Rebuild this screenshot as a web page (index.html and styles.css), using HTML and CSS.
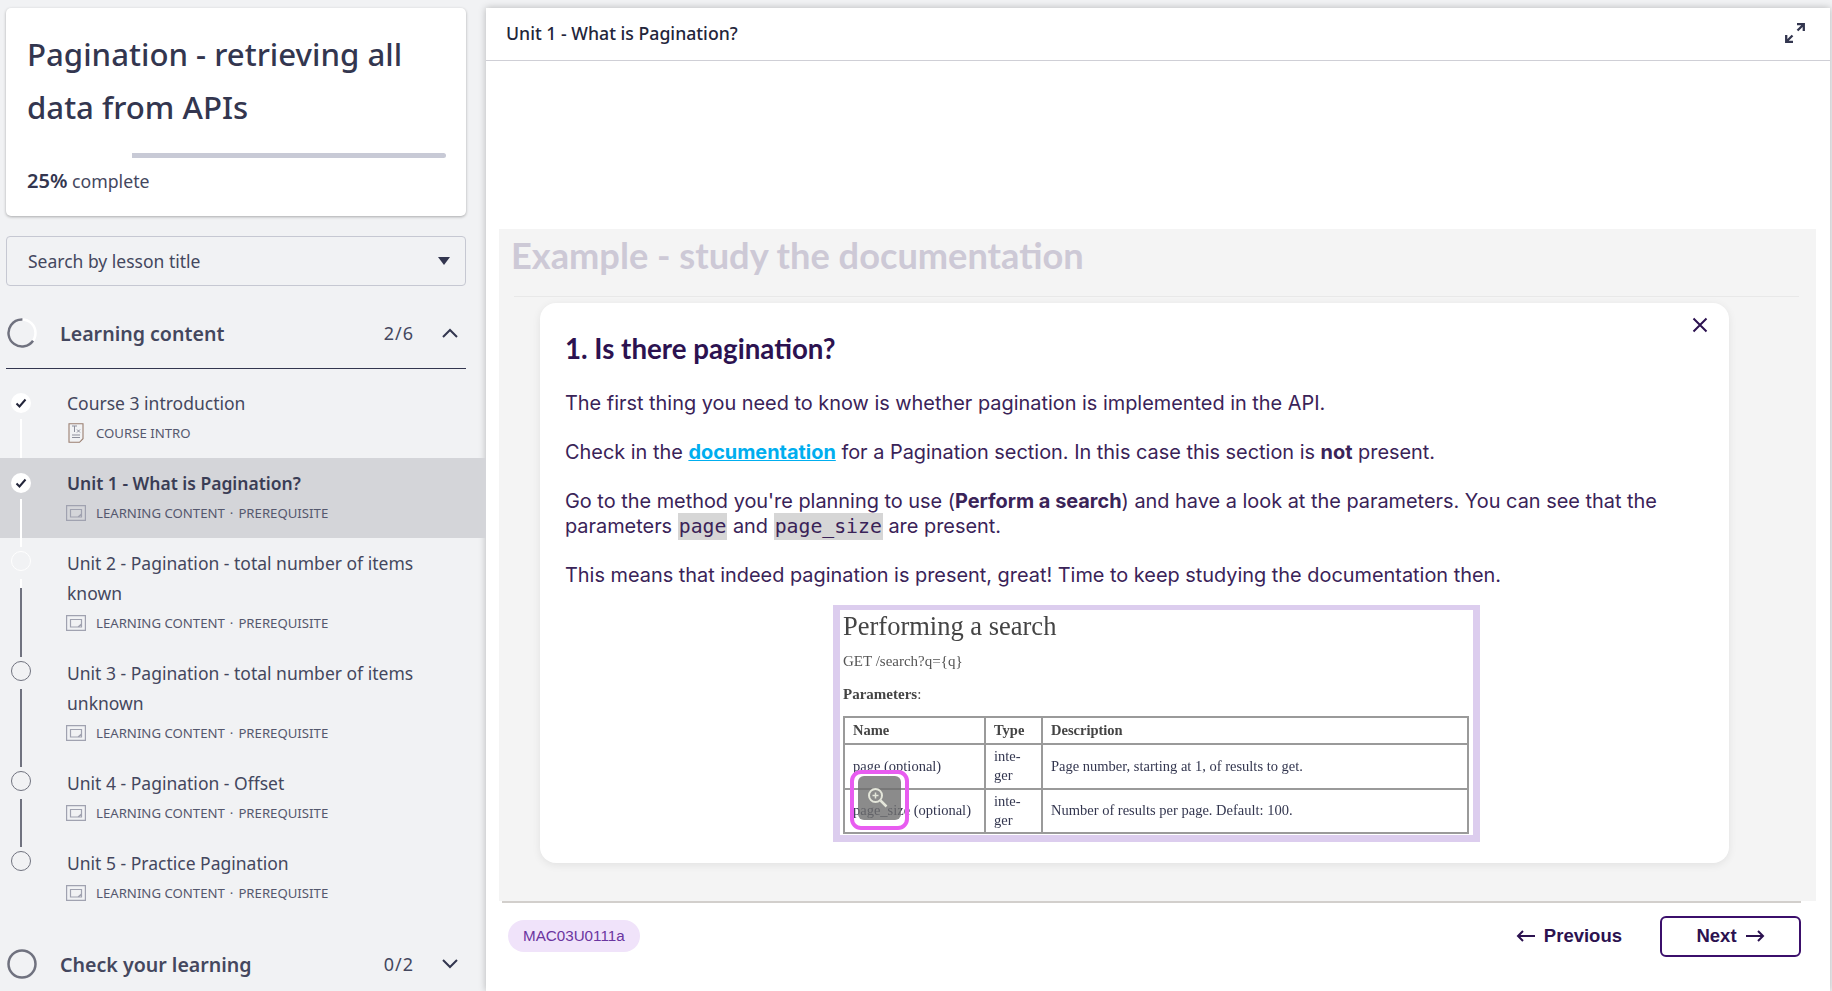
FILE: index.html
```html
<html>
  <head>
  <title>Pagination - retrieving all data from APIs</title>
  <link rel="stylesheet" href="styles.css">
  </head>
  <body>
    <aside class="sidebar">
      <div class="course-card">
        <h1>Pagination - retrieving all data from APIs</h1>
        <div class="progress">
          <div class="progress-done"></div>
          <div class="progress-left"></div>
        </div>
        <p class="progress-text"><b>25%</b> complete</p>
      </div>

      <div class="search">
        <span>Search by lesson title</span>
        <span class="caret"></span>
      </div>

      <div class="section-head section-open">
        <svg class="ring" viewBox="0 0 30 30" width="30" height="30">
          <circle cx="15" cy="15" r="13.5" fill="none" stroke="#fff" stroke-width="2.5"/>
          <circle cx="15" cy="15" r="13.5" fill="none" stroke="#70727f" stroke-width="2.5" stroke-dasharray="55.4 30" transform="rotate(35 15 15)"/>
        </svg>
        <span class="section-name">Learning content</span>
        <span class="section-count">2/6</span>
        <svg class="chevron" viewBox="0 0 16 10" width="16" height="10"><path d="M1 9l7-7 7 7" fill="none" stroke="#33364f" stroke-width="2"/></svg>
      </div>

      <ul class="lessons">
        <li class="lesson lesson-done">
          <span class="dot"><svg viewBox="0 0 20 20" width="20" height="20"><path d="M5.5 10.5l3 3 6-7" fill="none" stroke="#23253a" stroke-width="2"/></svg></span>
          <div>
            <div class="lesson-title">Course 3 introduction</div>
            <div class="lesson-meta">
              <svg class="meta-icon" viewBox="0 0 20 20" width="20" height="20">
                <path d="M3 .7h14v15l-3.500 3.600H3z" fill="none" stroke="#9a7f70" stroke-width="1.100"/>
                <path d="M6 3h5M8.500 3v6M11 6.500l3 3M14 6.500l-3 3M6 12h8M6 14.500h8" fill="none" stroke="#8d8f9c" stroke-width="1"/>
              </svg>
              <span>COURSE INTRO</span>
            </div>
          </div>
        </li>
        <li class="lesson lesson-done lesson-active">
          <span class="dot"><svg viewBox="0 0 20 20" width="20" height="20"><path d="M5.5 10.5l3 3 6-7" fill="none" stroke="#23253a" stroke-width="2"/></svg></span>
          <div>
            <div class="lesson-title">Unit 1 - What is Pagination?</div>
            <div class="lesson-meta">
              <svg class="meta-icon" viewBox="0 0 20 16" width="20" height="16"><path d="M.6.600h18.800v14.800H.6zM4.500 4.500h11v7.500H4.500zM12 12l3.500-3" fill="none" stroke="#a0a2b0" stroke-width="1.200"/></svg>
              <span>LEARNING CONTENT</span><span class="sep">·</span><span>PREREQUISITE</span>
            </div>
          </div>
        </li>
        <li class="lesson lesson-next">
          <span class="dot"></span>
          <div>
            <div class="lesson-title">Unit 2 - Pagination - total number of items known</div>
            <div class="lesson-meta">
              <svg class="meta-icon" viewBox="0 0 20 16" width="20" height="16"><path d="M.6.600h18.800v14.800H.6zM4.500 4.500h11v7.500H4.500zM12 12l3.500-3" fill="none" stroke="#a0a2b0" stroke-width="1.200"/></svg>
              <span>LEARNING CONTENT</span><span class="sep">·</span><span>PREREQUISITE</span>
            </div>
          </div>
        </li>
        <li class="lesson">
          <span class="dot"></span>
          <div>
            <div class="lesson-title">Unit 3 - Pagination - total number of items unknown</div>
            <div class="lesson-meta">
              <svg class="meta-icon" viewBox="0 0 20 16" width="20" height="16"><path d="M.6.600h18.800v14.800H.6zM4.500 4.500h11v7.500H4.500zM12 12l3.500-3" fill="none" stroke="#a0a2b0" stroke-width="1.200"/></svg>
              <span>LEARNING CONTENT</span><span class="sep">·</span><span>PREREQUISITE</span>
            </div>
          </div>
        </li>
        <li class="lesson">
          <span class="dot"></span>
          <div>
            <div class="lesson-title">Unit 4 - Pagination - Offset</div>
            <div class="lesson-meta">
              <svg class="meta-icon" viewBox="0 0 20 16" width="20" height="16"><path d="M.6.600h18.800v14.800H.6zM4.500 4.500h11v7.500H4.500zM12 12l3.500-3" fill="none" stroke="#a0a2b0" stroke-width="1.200"/></svg>
              <span>LEARNING CONTENT</span><span class="sep">·</span><span>PREREQUISITE</span>
            </div>
          </div>
        </li>
        <li class="lesson lesson-last">
          <span class="dot"></span>
          <div>
            <div class="lesson-title">Unit 5 - Practice Pagination</div>
            <div class="lesson-meta">
              <svg class="meta-icon" viewBox="0 0 20 16" width="20" height="16"><path d="M.6.600h18.800v14.800H.6zM4.500 4.500h11v7.500H4.500zM12 12l3.500-3" fill="none" stroke="#a0a2b0" stroke-width="1.200"/></svg>
              <span>LEARNING CONTENT</span><span class="sep">·</span><span>PREREQUISITE</span>
            </div>
          </div>
        </li>
      </ul>

      <div class="section-head">
        <svg class="ring" viewBox="0 0 30 30" width="30" height="30">
          <circle cx="15" cy="15" r="13.5" fill="none" stroke="#70727f" stroke-width="2.5"/>
        </svg>
        <span class="section-name">Check your learning</span>
        <span class="section-count">0/2</span>
        <svg class="chevron" viewBox="0 0 16 10" width="16" height="10"><path d="M1 1l7 7 7-7" fill="none" stroke="#33364f" stroke-width="2"/></svg>
      </div>
    </aside>

    <main class="main">
      <header class="main-head">
        <span>Unit 1 - What is Pagination?</span>
        <svg viewBox="0 0 20 20" width="20" height="20">
          <path d="M12 1.200h6.800V8M18.800 1.200L12.500 7.500M1.200 12v6.800H8M1.200 18.800L7.500 12.500" fill="none" stroke="#33364f" stroke-width="2.300"/>
        </svg>
      </header>

      <section class="content">
        <h2>Example - study the documentation</h2>
        <div class="rule"></div>
        <article class="card">
          <svg class="close" viewBox="0 0 16 16" width="16" height="16"><path d="M1.500 1.500l13 13M14.500 1.500l-13 13" fill="none" stroke="#2c1250" stroke-width="2"/></svg>
          <h3>1. Is there pagination?</h3>
          <p>The first thing you need to know is whether pagination is implemented in the API.</p>
          <p>Check in the <a href="#">documentation</a> for a Pagination section. In this case this section is <b>not</b> present.</p>
          <p>Go to the method you're planning to use (<b>Perform a search</b>) and have a look at the parameters. You can see that the parameters <code>page</code> and <code>page_size</code> are present.</p>
          <p>This means that indeed pagination is present, great! Time to keep studying the documentation then.</p>

          <div class="doc-shot">
            <div class="doc-inner">
              <div class="doc-title">Performing a search</div>
              <div class="doc-get">GET /search?q={q}</div>
              <div class="doc-params"><b>Parameters</b>:</div>
              <table>
                <tr><th class="col-name">Name</th><th class="col-type">Type</th><th>Description</th></tr>
                <tr><td>page (optional)</td><td>inte-<br>ger</td><td>Page number, starting at 1, of results to get.</td></tr>
                <tr><td>page_size (optional)</td><td>inte-<br>ger</td><td>Number of results per page. Default: 100.</td></tr>
              </table>
            </div>
            <div class="zoom-ring">
              <div class="zoom-btn">
                <svg viewBox="0 0 24 24" width="24" height="24">
                  <circle cx="10.500" cy="10.500" r="6.500" fill="none" stroke="#e4e6da" stroke-width="2"/>
                  <path d="M15.500 15.500l6 6" stroke="#e4e6da" stroke-width="2.500"/>
                  <path d="M7.500 10.500h6M10.500 7.500v6" stroke="#e4e6da" stroke-width="1.500"/>
                </svg>
              </div>
            </div>
          </div>
        </article>
      </section>

      <footer class="main-foot">
        <span class="chip">MAC03U0111a</span>
        <a class="prev" href="#">
          <svg viewBox="0 0 20 12" width="20" height="12"><path d="M19 6H2M7 1L2 6l5 5" fill="none" stroke="#2c1250" stroke-width="2"/></svg>
          Previous
        </a>
        <a class="next" href="#">
          Next
          <svg viewBox="0 0 20 12" width="20" height="12"><path d="M1 6h17M13 1l5 5-5 5" fill="none" stroke="#2c1250" stroke-width="2"/></svg>
        </a>
      </footer>
    </main>
  </body>
</html>
```

FILE: styles.css
```css
* {
  box-sizing: border-box;
}

html, body {
  height: 100%;
}

body {
  display: flex;
  margin: 0;
  height: 991px;
  overflow: hidden;
  background-color: #f1f2f4;
  font-family: "Noto Sans", Lato, sans-serif;
  color: #33364f;
}

/* sidebar */
.sidebar {
  width: 486px;
  flex: none;
  padding-top: 8px;
}

.course-card {
  width: 460px;
  margin-left: 6px;
  padding: 20px 20px 20px 21px;
  background-color: #fff;
  border-radius: 5px;
  box-shadow: 0 1px 3px rgba(0, 0, 0, 0.3);
}

.course-card h1 {
  margin: 0;
  font-size: 31.2px;
  line-height: 53px;
  font-weight: 500;
  color: #33364f;
}

.progress {
  display: flex;
  height: 5px;
  margin-top: 19px;
}

.progress-done {
  width: 25%;
  background-color: #fff;
}

.progress-left {
  flex: 1;
  background-color: #c8cad6;
  border-radius: 0 3px 3px 0;
}

.progress-text {
  margin: 8px 0 0;
  font-size: 17.7px;
  line-height: 30px;
  color: #44475e;
}

.progress-text b {
  font-size: 20px;
  font-weight: 600;
  color: #33364f;
}

.search {
  display: flex;
  align-items: center;
  justify-content: space-between;
  width: 460px;
  height: 50px;
  margin: 20px 0 0 6px;
  padding: 0 15px 0 21px;
  border: 1px solid #c6c8d2;
  border-radius: 4px;
  font-size: 17.5px;
  color: #44475e;
}

.caret {
  width: 0;
  height: 0;
  border-left: 6px solid transparent;
  border-right: 6px solid transparent;
  border-top: 8px solid #33364f;
}

.section-head {
  display: flex;
  align-items: center;
  width: 460px;
  height: 30px;
  margin: 31px 0 0 6px;
  font-size: 19.6px;
}

.section-open {
  box-sizing: content-box;
  margin-top: 32px;
  padding-bottom: 20px;
  border-bottom: 1px solid #33364f;
}

.ring {
  flex: none;
  margin-left: 1px;
}

.section-name {
  flex: 1;
  margin-left: 23px;
  font-weight: 600;
  color: #44475e;
}

.section-count {
  font-size: 18px;
  color: #44475e;
  letter-spacing: 1px;
}

.chevron {
  margin: 0 8px 0 28px;
}

.lessons {
  margin: 9px 0 0;
  padding: 0;
  list-style: none;
}

.lesson {
  position: relative;
  display: flex;
  padding: 10px 60px 10px 11px;
}

.dot {
  flex: none;
  display: block;
  width: 20px;
  height: 20px;
  margin-top: 3px;
  margin-right: 36px;
  border: 1px solid #70727f;
  border-radius: 50%;
}

/* connector between two lessons, runs across the row edge */
.lesson::after {
  content: "";
  position: absolute;
  left: 20px;
  top: 41px;
  bottom: -9px;
  width: 2px;
  background-color: #70727f;
}

.lesson-last::after {
  display: none;
}

.lesson-done .dot {
  margin-top: 5px;
  background-color: #fff;
  border: none;
}

.lesson-done::after {
  background-color: #fff;
}

.lesson-next .dot {
  border-color: #fff;
}

.lesson-next::after {
  background: linear-gradient(#fff 9px, #70727f 9px);
}

.lesson-active {
  background-color: #d4d5d9;
}

.lesson-title {
  font-size: 17.5px;
  line-height: 30px;
  color: #44475e;
}

.lesson-active .lesson-title {
  font-weight: 600;
  color: #3a3d55;
}

.lesson-meta {
  display: flex;
  align-items: center;
  height: 30px;
  font-size: 13.2px;
  color: #55586e;
}

.meta-icon {
  margin-left: -1px;
  margin-right: 10px;
}

.sep {
  margin: 0 5px;
}

/* main panel */
.main {
  flex: 1;
  margin: 8px 2px 0 0;
  background-color: #fff;
  box-shadow: 0 0 7px rgba(0, 0, 0, 0.25);
}

.main-head {
  display: flex;
  align-items: center;
  justify-content: space-between;
  height: 53px;
  padding: 0 25px 3px 20px;
  border-bottom: 1px solid #cfcfd6;
  font-size: 17.7px;
  font-weight: 500;
  color: #23253a;
}

.content {
  margin: 168px 14px 0 13px;
  padding: 6px 0 38px;
  background-color: #f4f4f4;
}

.content h2 {
  margin: 0;
  padding-left: 12px;
  font-family: Lato, sans-serif;
  font-size: 36.2px;
  line-height: 40px;
  font-weight: 700;
  color: #cdc9d6;
}

.rule {
  height: 1px;
  margin: 21px 17px 6px 15px;
  background-color: #e8e8e8;
}

.card {
  position: relative;
  margin: 0 87px 0 41px;
  padding: 29px 25px 21px;
  background-color: #fff;
  border-radius: 16px;
  box-shadow: 0 2px 8px rgba(0, 0, 0, 0.08);
  font-family: Inter, sans-serif;
  font-size: 19.9px;
  line-height: 25px;
  color: #3a2358;
}

.close {
  position: absolute;
  top: 14px;
  right: 21px;
}

.card h3 {
  margin: 0 0 25px;
  font-family: Lato, sans-serif;
  font-size: 27.7px;
  line-height: 34px;
  font-weight: 700;
  color: #2c1250;
}

.card p {
  margin: 0 0 24px;
}

.card a {
  font-weight: 700;
  color: #00aeef;
}

.card code {
  padding: 0 1px;
  background-color: #d6d6d6;
  box-shadow: 0 2px #d6d6d6, 0 -2px #d6d6d6;
  font-family: "DejaVu Sans Mono", monospace;
  font-size: 19.8px;
}

.doc-shot {
  position: relative;
  width: 647px;
  height: 237px;
  margin: -7px 0 0 268px;
  border: 7px solid #dccdee;
}

.doc-inner {
  height: 100%;
  padding: 0 4px 0 3px;
  background-color: #fff;
  filter: blur(0.4px);
  font-family: "Liberation Serif", serif;
  color: #555;
}

.doc-title {
  margin-top: -2px;
  font-size: 26.5px;
  line-height: 32px;
  color: #444;
}

.doc-get {
  margin-top: 9px;
  font-size: 15px;
  line-height: 20px;
}

.doc-params {
  margin-top: 13px;
  font-size: 15px;
  line-height: 20px;
  color: #444;
}

.doc-inner table {
  width: 100%;
  height: 118px;
  margin-top: 12px;
  border-collapse: collapse;
  font-size: 14.5px;
  line-height: 19px;
}

.doc-inner th,
.doc-inner td {
  padding: 0 8px;
  border: 2px solid #9a9a9a;
  text-align: left;
  white-space: nowrap;
}

.doc-inner th {
  height: 27px;
  color: #444;
}

.col-name {
  width: 141px;
}

.col-type {
  width: 57px;
}

.zoom-ring {
  position: absolute;
  left: 10px;
  top: 158px;
  width: 59px;
  height: 60px;
  padding: 2px;
  border: 4px solid #e85cf0;
  border-radius: 11px;
}

.zoom-btn {
  display: flex;
  align-items: center;
  justify-content: center;
  width: 43px;
  height: 44px;
  margin: 0 auto;
  padding: 0 5px 3px 0;
  background-color: rgba(110, 110, 110, 0.8);
  border-radius: 6px;
}

/* footer */
.main-foot {
  display: flex;
  align-items: center;
  height: 68px;
  margin: 0 29px 0 16px;
  padding-left: 6px;
  border-top: 2px solid #d2cfcc;
  font-family: "Liberation Sans", sans-serif;
}

.chip {
  padding: 0 15px;
  line-height: 32px;
  background-color: #f0e3fa;
  border-radius: 16px;
  font-size: 15.2px;
  color: #6b35a0;
}

.prev,
.next {
  display: flex;
  align-items: center;
  gap: 8px;
  font-size: 18.5px;
  font-weight: 700;
  color: #2c1250;
  text-decoration: none;
}

.prev {
  margin-left: auto;
}

.next {
  justify-content: center;
  width: 141px;
  height: 41px;
  margin-left: 38px;
  border: 2px solid #3b0f6b;
  border-radius: 6px;
}
```
